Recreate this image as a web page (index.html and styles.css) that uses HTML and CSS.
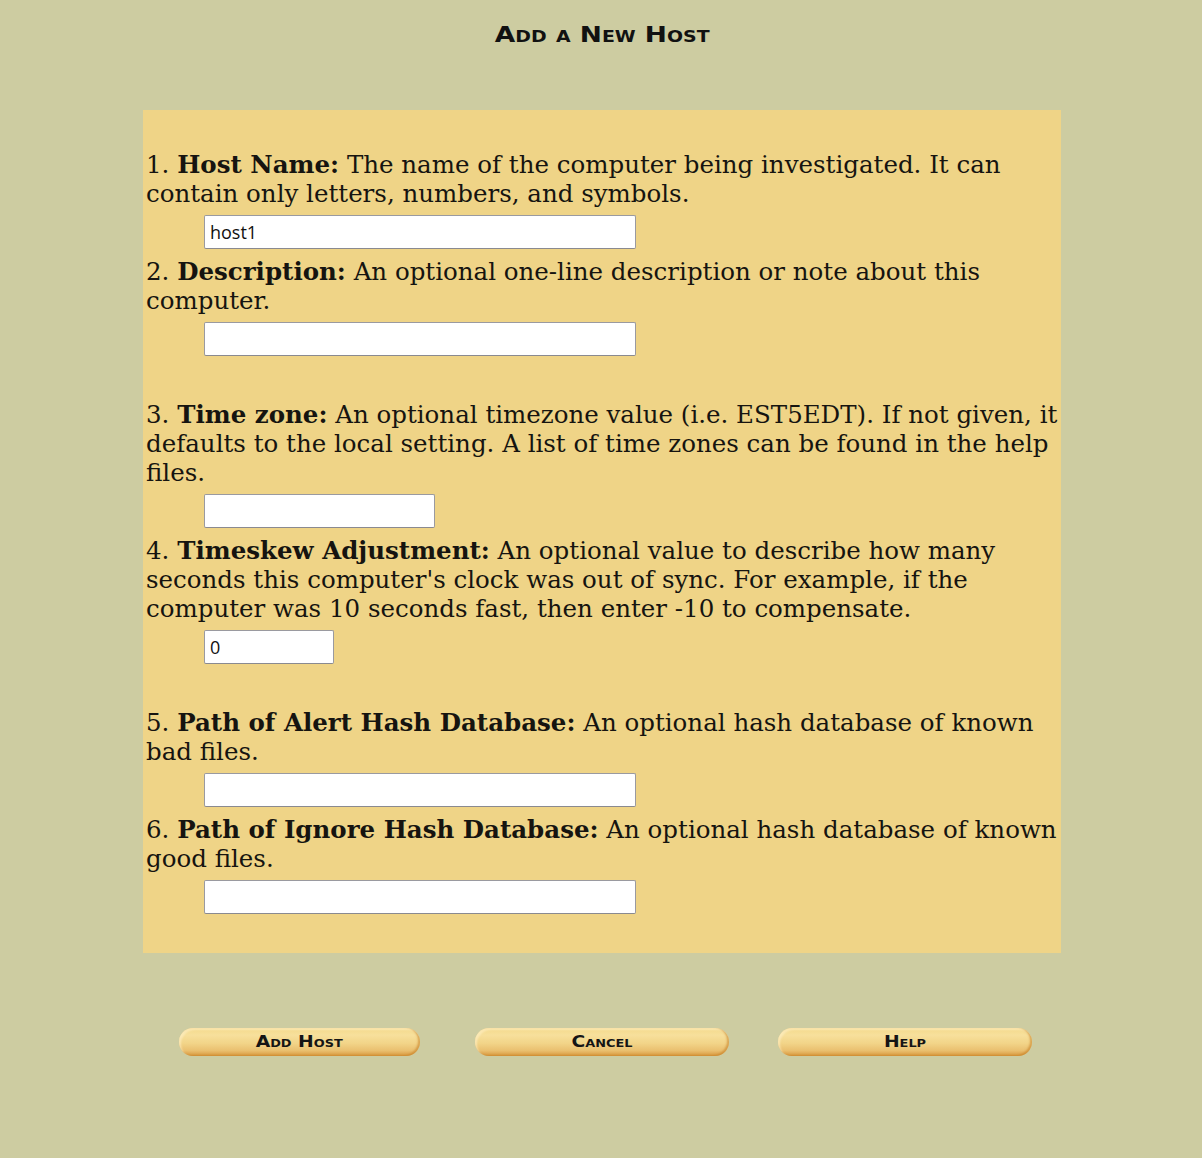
FILE: index.html
```html
<!DOCTYPE html>
<html>
<head>
<meta charset="utf-8">
<title>Add a New Host</title>
<link rel="stylesheet" href="styles.css">
</head>
<body>
<div class="page">
  <h1 class="title"><span class="wide">Add a New Host</span></h1>
  <form class="panel">
    <div class="field">
      <p class="desc">1. <b>Host Name:</b> The name of the computer being investigated. It can contain only letters, numbers, and symbols.</p>
      <input class="inp inp-long" type="text" value="host1">
    </div>
    <div class="field">
      <p class="desc">2. <b>Description:</b> An optional one-line description or note about this computer.</p>
      <input class="inp inp-long" type="text" value="">
    </div>
    <div class="field group">
      <p class="desc">3. <b>Time zone:</b> An optional timezone value (i.e. EST5EDT). If not given, it defaults to the local setting. A list of time zones can be found in the help files.</p>
      <input class="inp inp-mid" type="text" value="">
    </div>
    <div class="field">
      <p class="desc">4. <b>Timeskew Adjustment:</b> An optional value to describe how many seconds this computer's clock was out of sync. For example, if the computer was 10 seconds fast, then enter -10 to compensate.</p>
      <input class="inp inp-short" type="text" value="0">
    </div>
    <div class="field group">
      <p class="desc">5. <b>Path of Alert Hash Database:</b> An optional hash database of known bad files.</p>
      <input class="inp inp-long" type="text" value="">
    </div>
    <div class="field">
      <p class="desc">6. <b>Path of Ignore Hash Database:</b> An optional hash database of known good files.</p>
      <input class="inp inp-long" type="text" value="">
    </div>
  </form>
  <div class="buttons">
    <div class="cell"><span class="btn btn-add"><span class="btn-label">Add Host</span></span></div>
    <div class="cell"><span class="btn btn-wide"><span class="btn-label">Cancel</span></span></div>
    <div class="cell"><span class="btn btn-wide"><span class="btn-label">Help</span></span></div>
  </div>
</div>
</body>
</html>
```
FILE: styles.css
```css
html, body {
  margin: 0;
  padding: 0;
  background: #cdcca1;
}
.page {
  width: 1202px;
  min-height: 1158px;
  display: flex;
  flex-direction: column;
  align-items: center;
}
.title {
  margin: 19px 0 0 2px;
  height: 32px;
  font-family: "DejaVu Sans", "Liberation Sans", sans-serif;
  font-weight: bold;
  font-variant: small-caps;
  font-size: 21px;
  line-height: 32px;
  color: #111;
}
.wide {
  display: inline-block;
  transform: scaleX(1.26);
}
.panel {
  margin: 59px 0 0 2px;
  width: 913px;
  padding: 40px 2px 31px 3px;
  background: #efd487;
  display: flex;
  flex-direction: column;
}
.field {
  display: flex;
  flex-direction: column;
  align-items: flex-start;
}
.group {
  margin-top: 36px;
}
.desc {
  margin: 0;
  font-family: "DejaVu Serif", serif;
  font-size: 24.5px;
  line-height: 29px;
  color: #161410;
}
.desc b {
  font-weight: bold;
}
.inp {
  box-sizing: border-box;
  height: 34px;
  margin: 7px 0 8px 58px;
  padding: 0 5px;
  background: #fff;
  border: 1px solid #9a9aa0;
  border-bottom-color: #8a8a90;
  border-radius: 2px;
  font-family: "Open Sans", "DejaVu Sans", sans-serif;
  font-size: 18px;
  color: #111;
}
.inp-long { width: 432px; }
.inp-mid { width: 231px; }
.inp-short { width: 130px; }
.buttons {
  margin: 75px 0 0 2px;
  width: 909px;
  display: flex;
}
.cell {
  flex: 1;
  display: flex;
  justify-content: center;
}
.btn {
  box-sizing: border-box;
  height: 28px;
  display: flex;
  align-items: center;
  justify-content: center;
  border-radius: 14px;
  background: linear-gradient(to bottom, #f4d98a 0%, #f7e09c 25%, #f2d488 55%, #eac070 80%, #d99a40 100%);
  box-shadow: inset -2px -1px 2px rgba(200, 130, 40, 0.6), inset 2px 2px 2px rgba(255, 240, 200, 0.6);
  padding-bottom: 2px;
}
.btn-label {
  display: inline-block;
  font-family: "DejaVu Sans", "Liberation Sans", sans-serif;
  font-weight: bold;
  font-variant: small-caps;
  font-size: 16px;
  color: #151515;
  transform: scaleX(1.17);
}
.btn-add { width: 241px; }
.btn-wide { width: 254px; }
```
